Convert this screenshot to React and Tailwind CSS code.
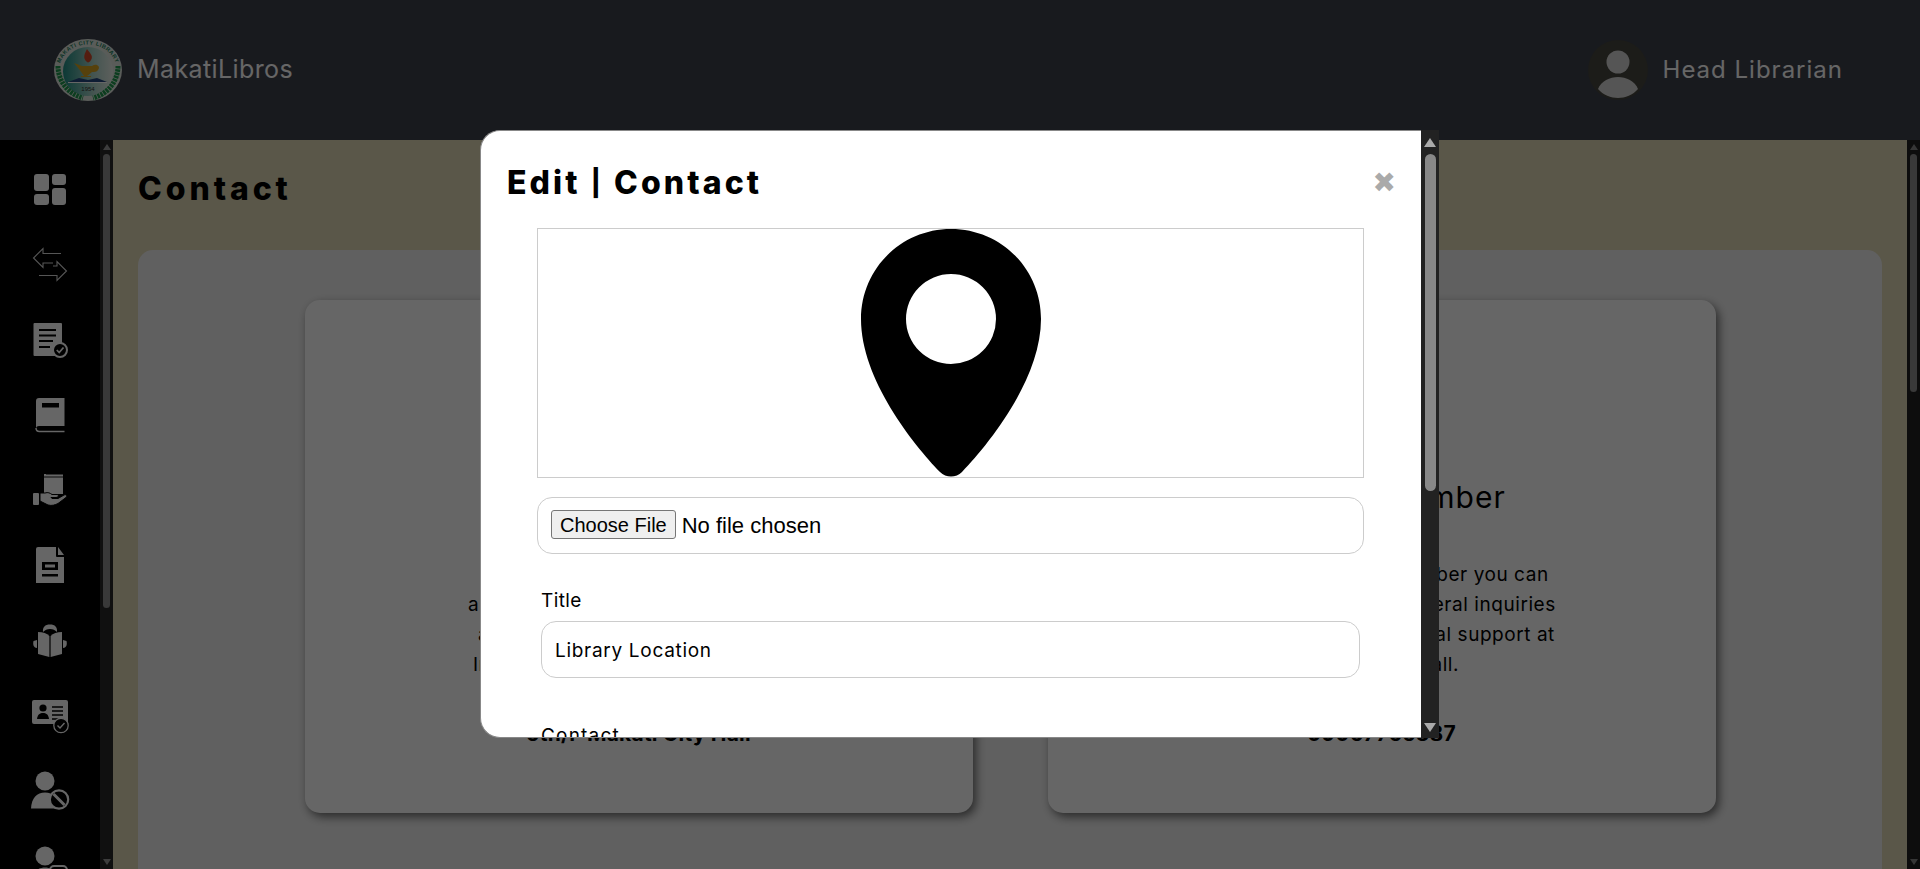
import React from "react";

const P = "font-['Inter','Liberation_Sans',sans-serif]";

function Logo() {
  return (
    <svg viewBox="0 0 68 62" className="w-[68px] h-[62px] shrink-0">
      <defs>
        <path id="arc" d="M5 32 A29 26.5 0 0 1 63 32" />
        <linearGradient id="g" x1="0" x2="1" y1="0" y2="0">
          <stop offset="0" stopColor="#1f8f86" />
          <stop offset="0.6" stopColor="#a9d3c8" />
          <stop offset="1" stopColor="#e9efe8" />
        </linearGradient>
      </defs>
      <ellipse cx="34" cy="31" rx="34" ry="31" fill="#dfe6df" />
      <ellipse cx="34" cy="32.5" rx="25" ry="24.5" fill="url(#g)" />
      <text fontSize="5.6" fontWeight="700" fill="#1b7f5c" fontFamily="Liberation Sans, sans-serif" letterSpacing="0.5" textAnchor="middle">
        <textPath href="#arc" startOffset="50%">MAKATI CITY LIBRARY</textPath>
      </text>
      <path d="M4 27 C4 42 14 55 29 59 M64 27 C64 42 54 55 39 59" fill="none" stroke="#1f9a4e" strokeWidth="5" strokeDasharray="2.5 0.8" />
      <path d="M33 23 C28 19 31 14 33 10 C35 13 40 17 37 21 C36 23 34 24 33 23Z" fill="#d2492a" />
      <path d="M20 24 L28 27 L38 27 C42 24 47 27 44 31 C43 33 40 33 38 33 C36 35 34 36 33 37 L37 37 L37 38 L27 38 L27 37 L30 37 C27 33 24 28 20 24Z" fill="#d6a41f" />
      <path d="M14 43 L25 39 L34 41 L43 39 L53 43Z" fill="#25467f" />
      <path d="M14 43.5 L53 43.5" stroke="#fff" strokeWidth="1" />
      <text x="34" y="52" textAnchor="middle" fontSize="6" fill="#333" fontFamily="Liberation Sans, sans-serif">1954</text>
    </svg>
  );
}

const ic = "w-[40px] h-[40px] text-[#ffffff]";

function IDash() {
  return (
    <svg viewBox="0 0 40 40" className={ic} fill="currentColor">
      <rect x="4" y="4" width="15" height="17" rx="3" />
      <rect x="22" y="4" width="14" height="11" rx="3" />
      <rect x="4" y="24" width="15" height="11" rx="3" />
      <rect x="22" y="18" width="14" height="17" rx="3" />
    </svg>
  );
}
function IArrows() {
  return (
    <svg viewBox="0 0 40 40" className={ic} fill="none" stroke="#d8d8d8" strokeWidth="1.1">
      <path d="M31 8.5 H13 V3.5 L3.5 13 L13 22.5 V18 H23" />
      <path d="M9 30.5 H27 V35.5 L36.5 26 L27 16.5 V21 H23" />
    </svg>
  );
}
function IDocCheck() {
  return (
    <svg viewBox="0 0 40 40" className={ic}>
      <path fill="currentColor" d="M3.5 4 Q3.5 3 4.5 3 H31 Q32 3 32 4 V36 H4.5 Q3.5 36 3.5 35Z" />
      <path stroke="#000" strokeWidth="2.2" d="M9 10 H26 M9 15.5 H26 M9 21 H23 M9 27 H20" />
      <circle cx="30" cy="30" r="7" fill="#000" stroke="currentColor" strokeWidth="2" />
      <path d="M26.8 30 L29.2 32.5 L33.5 27.5" stroke="currentColor" strokeWidth="1.8" fill="none" />
    </svg>
  );
}
function IBook() {
  return (
    <svg viewBox="0 0 40 40" className={ic}>
      <path fill="currentColor" d="M9 3 H34.5 V31 H9 C7 31 6 32.3 6 34 V6 C6 4 7 3 9 3Z" />
      <path d="M6 33 C6 35.5 7.5 36.5 9.5 36.5 H34.5" fill="none" stroke="currentColor" strokeWidth="1.4" />
      <rect x="12" y="8" width="17" height="4.5" fill="#000" />
    </svg>
  );
}
function IHand() {
  return (
    <svg viewBox="0 0 40 40" className={ic}>
      <path fill="currentColor" d="M14 4 H33 V24 H14Z" />
      <path d="M13 7 H33" stroke="#000" strokeWidth="0.9" />
      <path d="M16 4.5 H33" stroke="#000" strokeWidth="0.5" />
      <path fill="currentColor" stroke="#000" strokeWidth="1" d="M10 23 H15 C18 22 20 23 22 24.5 H27 C29 24.5 29 27.5 26 27.5 H21 L22 28.5 H28 L34 25 C36.5 24 37.5 26 36 27.5 L28 33.5 C25 35 22 36 18 35 L10 31Z" />
      <rect x="3" y="23" width="6" height="12" rx="1" fill="currentColor" />
    </svg>
  );
}
function IFile() {
  return (
    <svg viewBox="0 0 40 40" className={ic}>
      <path fill="currentColor" d="M6 3 Q6 1 8 1 H26 V10 Q26 11 27 11 H34 V37 H6Z" />
      <path fill="currentColor" d="M28 1 L34 9 H28Z" />
      <path d="M12 16 H28 V24 H12Z" fill="#000" />
      <rect x="15" y="18.5" width="10" height="3" fill="currentColor" />
      <rect x="12" y="28" width="16" height="2.5" fill="#000" />
    </svg>
  );
}
function IReader() {
  return (
    <svg viewBox="0 0 40 40" className={ic} fill="currentColor">
      <path d="M13 11 C12.5 6 15 3.5 20 3.5 C25 3.5 27.5 6 27 11 C25 9 23 8 20 8 C17 8 15 9 13 11Z" />
      <path d="M8 11 C13 11 17 12.5 19.4 15 V36 L8 33 Z" />
      <path d="M32 11 C27 11 23 12.5 20.6 15 V36 L32 33 Z" />
      <path d="M3.5 20 L7 19 V27 C4 27 2.5 24 3.5 20Z" />
      <path d="M36.5 20 L33 19 V27 C36 27 37.5 24 36.5 20Z" />
    </svg>
  );
}
function IdCheck() {
  return (
    <svg viewBox="0 0 40 40" className={ic}>
      <rect x="2" y="4" width="36" height="24" rx="2" fill="currentColor" />
      <circle cx="13" cy="12" r="3.6" fill="#000" />
      <path d="M7 23 C7.5 18.5 10 17 13 17 C16 17 18.5 18.5 19 23Z" fill="#000" />
      <path d="M22 11 H33 M22 15 H33 M22 19 H33 M22 23 H28" stroke="#000" strokeWidth="1.4" />
      <circle cx="31" cy="29.5" r="7.2" fill="#000" stroke="currentColor" strokeWidth="1.3" />
      <path d="M27.5 29.5 L30 32 L34.5 27" stroke="currentColor" strokeWidth="1.4" fill="none" />
    </svg>
  );
}
function IUserBan() {
  return (
    <svg viewBox="0 0 40 40" className={ic}>
      <circle cx="15" cy="10" r="9.5" fill="currentColor" />
      <path d="M1 37.5 C1.5 27 7 21.5 15 21.5 C23 21.5 29 27 29 37.5Z" fill="currentColor" />
      <circle cx="29" cy="28.5" r="9.2" fill="#000" stroke="currentColor" strokeWidth="2.2" />
      <path d="M23.5 23 L34.5 34" stroke="currentColor" strokeWidth="3" />
    </svg>
  );
}
function IUserLock() {
  return (
    <svg viewBox="0 0 40 40" className={ic}>
      <circle cx="15" cy="10" r="9.5" fill="currentColor" />
      <path d="M1 37.5 C1.5 27 7 21.5 15 21.5 C23 21.5 29 27 29 37.5Z" fill="currentColor" />
      <rect x="20" y="20" width="17" height="17" rx="4" fill="#000" stroke="currentColor" strokeWidth="2" />
    </svg>
  );
}

const icons = [IDash, IArrows, IDocCheck, IBook, IHand, IFile, IReader, IdCheck, IUserBan, IUserLock];

function Sidebar() {
  return (
    <aside className="flex w-[113px] shrink-0 h-full overflow-hidden">
      <div className="w-[100px] bg-black flex flex-col items-center pt-[12px] overflow-hidden">
        {icons.map((I, i) => (
          <div key={i} className="h-[75.2px] shrink-0 flex items-center justify-center">
            <I />
          </div>
        ))}
      </div>
      <div className="w-[13px] bg-[#2a2a2a] flex flex-col items-center">
        <div className="mt-[4px] w-0 h-0 border-x-[4px] border-x-transparent border-b-[6px] border-b-[#999]" />
        <div className="mt-[4px] w-[7px] h-[454px] rounded-full bg-[#8f8f8f]" />
        <div className="mt-auto mb-[4px] w-0 h-0 border-x-[4px] border-x-transparent border-t-[6px] border-t-[#999]" />
      </div>
    </aside>
  );
}

function Card({ title, lines, strong }) {
  return (
    <div className="w-[668px] h-[513px] bg-white rounded-[15px] shadow-[3px_4px_10px_rgba(0,0,0,0.55)] flex flex-col items-center pt-[178px]">
      <h2 className="text-[30px] leading-[38px] tracking-[1.1px] text-black">{title}</h2>
      <div className="mt-[44px] flex flex-col items-center h-[120px] justify-end text-[19px] leading-[30px] text-black whitespace-nowrap tracking-[0.55px]">
        {lines.map((l) => (
          <div key={l}>{l}</div>
        ))}
      </div>
      <div className="mt-[39px] text-[21px] leading-[30px] font-bold text-black tracking-[0.2px]">{strong}</div>
    </div>
  );
}

export default function App() {
  return (
    <div className={`relative h-screen w-full overflow-hidden ${P}`}>
      <header className="h-[140px] bg-[#3e414d] flex items-center justify-between pl-[54px] pr-[77px]">
        <div className="flex items-center gap-[15px]">
          <Logo />
          <span className="text-[25px] text-white tracking-[0.4px]">MakatiLibros</span>
        </div>
        <div className="flex items-center gap-[14px]">
          <svg viewBox="0 0 62 62" className="w-[62px] h-[62px]">
            <circle cx="31" cy="31" r="30" fill="#46463f" />
            <circle cx="31" cy="23" r="11.5" fill="#d4d4d4" />
            <path d="M11 50 C14 42 23 38 31 38 C39 38 48 42 51 50 C46 56 38 59 31 59 C24 59 16 56 11 50Z" fill="#d4d4d4" />
          </svg>
          <span className="text-[24px] text-white tracking-[1px]">Head Librarian</span>
        </div>
      </header>

      <div className="flex h-[729px]">
        <Sidebar />
        <main className="flex-1 bg-[#e1d9b6] px-[25px] pt-[28px] overflow-hidden">
          <h1 className="text-[32px] leading-[42px] font-extrabold text-black tracking-[3.9px]">Contact</h1>
          <section className="mt-[40px] h-[700px] bg-[#f0f0f0] rounded-[15px] pt-[50px] flex justify-center gap-[75px]">
            <Card
              title="Library Location"
              lines={["a library at the heart of the city, you", "and open to all residents that visit", "Inside the main building of the City"]}
              strong="5th/F Makati City Hall"
            />
            <Card
              title="Contact Number"
              lines={[
                "This is the contact number you can",
                "call this number for general inquiries",
                "you may call for technical support at",
                "Makati City Hall.",
              ]}
              strong="09067765387"
            />
          </section>
        </main>
        <div className="w-[13px] shrink-0 bg-[#222] flex flex-col items-center">
          <div className="mt-[4px] w-0 h-0 border-x-[4px] border-x-transparent border-b-[6px] border-b-[#888]" />
          <div className="mt-[4px] w-[7px] h-[238px] rounded-full bg-[#8f8f8f]" />
          <div className="mt-auto mb-[4px] w-0 h-0 border-x-[4px] border-x-transparent border-t-[6px] border-t-[#888]" />
        </div>
      </div>

      <div className="absolute inset-0 bg-black/60" />

      <div className="absolute left-[480px] top-[130px] w-[959px] h-[608px] flex">
        <div className="flex-1 bg-white rounded-l-[20px] border border-[#888] border-r-0 overflow-hidden pl-[26px]">
          <div className="flex items-center justify-between pt-[27px] pr-[25px]">
            <h2 className="text-[32px] leading-[50px] font-extrabold tracking-[3.1px] text-black">
              Edit <span className="text-[26px] align-[2px]">|</span> Contact
            </h2>
            <span className="font-['DejaVu_Sans',sans-serif] text-[28px] leading-none text-[#aaa]">✖</span>
          </div>
          <div className="ml-[30px] w-[827px]">
            <div className="mt-[20px] h-[250px] border border-[#ccc] flex justify-center">
              <svg viewBox="0 0 180 248" className="w-[180px] h-[248px]">
                <path
                  fillRule="evenodd"
                  d="M90 0 C140 0 180 40 180 90 C180 150 128 215 101 243 C95 249 85 249 79 243 C52 215 0 150 0 90 C0 40 40 0 90 0Z M90 45 A45 45 0 1 0 90 135 A45 45 0 1 0 90 45Z"
                  fill="#000"
                />
              </svg>
            </div>
            <input
              type="file"
              className="mt-[19px] block w-full h-[57px] border border-[#ccc] rounded-[15px] pl-[13px] py-[12px] text-[22px] leading-[28px] text-black font-['Liberation_Sans',sans-serif] file:text-[20px] file:h-[29px] file:align-[1px] file:bg-[#efefef] file:border file:border-[#767676] file:rounded-[3px] file:px-[8px] file:mr-[6px]"
            />
            <label className="block mt-[35px] ml-[4px] text-[19px] leading-[24px] text-black tracking-[0.4px]">Title</label>
            <input
              readOnly
              value="Library Location"
              className="mt-[8px] ml-[4px] block w-[819px] h-[57px] border border-[#ccc] rounded-[15px] px-[13px] pt-[2px] text-[19px] text-black tracking-[0.7px] outline-none"
            />
            <label className="block mt-[46px] ml-[4px] text-[19px] leading-[24px] text-black tracking-[1.2px]">Contact</label>
          </div>
        </div>
        <div className="w-[18px] shrink-0 bg-[#222] flex flex-col items-center">
          <div className="mt-[8px] w-0 h-0 border-x-[6px] border-x-transparent border-b-[9px] border-b-[#aaa]" />
          <div className="mt-[7px] w-[11px] h-[337px] rounded-full bg-[#888]" />
          <div className="mt-auto mb-[6px] w-0 h-0 border-x-[6px] border-x-transparent border-t-[9px] border-t-[#aaa]" />
        </div>
      </div>
    </div>
  );
}
